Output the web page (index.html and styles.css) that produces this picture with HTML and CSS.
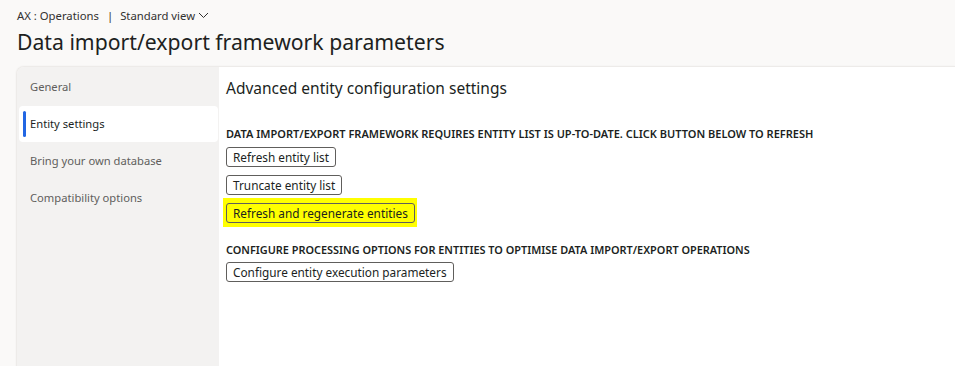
FILE: index.html
```html
<!DOCTYPE html>
<html lang="en">
<head>
    <meta charset="UTF-8">
    <meta name="viewport" content="width=device-width, initial-scale=1.0">
    <title>Data import/export framework parameters</title>
    <link rel="stylesheet" href="styles.css">
</head>
<body>
    <div class="header">
        <div class="crumbs">
            <span>AX : Operations</span>
            <span class="sep">|</span>
            <span>Standard view</span>
            <svg class="chev" width="11" height="7" viewBox="0 0 11 7"><path d="M1 1l4.5 4.5L10 1" fill="none" stroke="#323130" stroke-width="1"/></svg>
        </div>
        <h1>Data import/export framework parameters</h1>
    </div>

    <div class="panel">
        <nav class="tabs">
            <div class="tab">General</div>
            <div class="tab active">Entity settings</div>
            <div class="tab">Bring your own database</div>
            <div class="tab">Compatibility options</div>
        </nav>

        <main class="content">
            <h2>Advanced entity configuration settings</h2>

            <div class="group">
                <h3>DATA IMPORT/EXPORT FRAMEWORK REQUIRES ENTITY LIST IS UP-TO-DATE. CLICK BUTTON BELOW TO REFRESH</h3>
                <div class="buttons">
                    <button>Refresh entity list</button>
                    <button>Truncate entity list</button>
                    <span class="mark"><button>Refresh and regenerate entities</button></span>
                </div>
            </div>

            <div class="group">
                <h3>CONFIGURE PROCESSING OPTIONS FOR ENTITIES TO OPTIMISE DATA IMPORT/EXPORT OPERATIONS</h3>
                <div class="buttons">
                    <button>Configure entity execution parameters</button>
                </div>
            </div>
        </main>
    </div>
</body>
</html>
```

FILE: styles.css
```css
body {
    margin: 0;
    font-family: "Noto Sans", "Open Sans", sans-serif;
    background-color: #faf9f8;
    color: #201f1e;
    height: 366px;
    overflow: hidden;
}
.header {
    padding: 5px 0 0 17px;
}
.crumbs {
    display: flex;
    align-items: center;
    font-size: 11.3px;
    color: #323130;
    height: 20px;
}
.crumbs .sep {
    margin: 0 7px 0 8px;
}
.chev {
    margin-left: 3px;
}
h1 {
    margin: 3px 0 0;
    font-size: 21.2px;
    font-weight: 400;
    line-height: 28px;
}
.panel {
    display: flex;
    margin: 10px 0 0 16px;
    height: 310px;
    border-top-left-radius: 8px;
    border: 1px solid #edebe9;
    border-right: none;
    border-bottom: none;
    overflow: hidden;
    box-shadow: 0 0 2px rgba(0, 0, 0, 0.06);
}
.tabs {
    width: 202px;
    flex-shrink: 0;
    background-color: #f3f2f1;
    padding: 2px 1px 0 2px;
    box-sizing: border-box;
}
.tab {
    position: relative;
    height: 36px;
    margin-bottom: 1px;
    line-height: 36px;
    padding-left: 11px;
    font-size: 11.2px;
    color: #605e5c;
    border-radius: 4px;
}
.tab.active {
    background-color: #fff;
    color: #201f1e;
}
.tab.active::before {
    content: "";
    position: absolute;
    left: 4px;
    top: 5px;
    bottom: 5px;
    width: 3px;
    border-radius: 2px;
    background-color: #2266e3;
}
.content {
    flex: 1;
    background-color: #fff;
    padding: 9px 0 0 7px;
}
h2 {
    margin: 0;
    font-size: 15.5px;
    font-weight: 400;
    line-height: 24px;
}
.group {
    margin-top: 26px;
}
.group + .group {
    margin-top: 15px;
}
h3 {
    margin: 0;
    font-size: 11px;
    font-weight: 600;
    line-height: 16px;
}
.group + .group h3 {
    font-size: 10.9px;
}
.buttons {
    display: flex;
    flex-direction: column;
    align-items: flex-start;
    gap: 8px;
    margin-top: 5px;
}
.group + .group .buttons {
    margin-top: 4px;
}
button {
    font-family: inherit;
    font-size: 11.8px;
    color: #201f1e;
    background-color: transparent;
    border: 1px solid #605e5c;
    border-radius: 3px;
    height: 20px;
    padding: 0 6px;
    line-height: 18px;
}
.mark {
    display: flex;
    background-color: #ffff00;
    padding: 5px 2px 4px 3px;
    margin: -5px 0 0 -3px;
}
```
